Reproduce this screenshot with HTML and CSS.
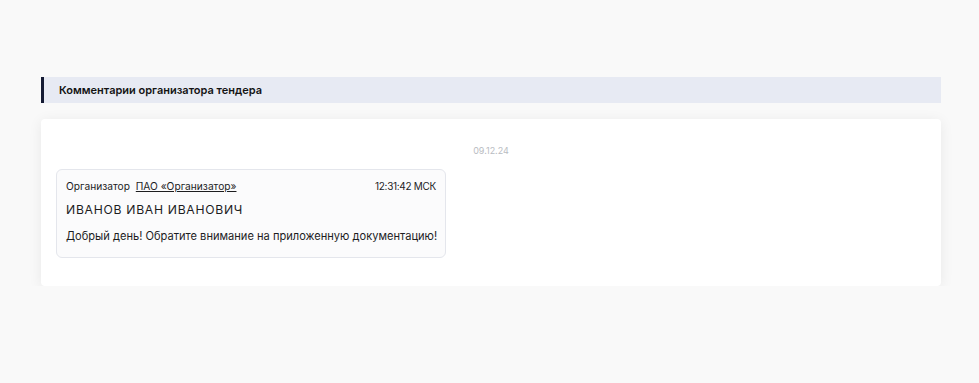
FILE: index.html
```html
<!DOCTYPE html>
<html lang="ru">
<head>
<meta charset="utf-8">
<link rel="stylesheet" href="styles.css">
</head>
<body>
<div class="page">
  <div class="section-title">Комментарии организатора тендера</div>
  <div class="card">
    <div class="date">09.12.24</div>
    <div class="message">
      <div class="meta">
        <div class="from">Организатор <a href="#" class="org">ПАО «Организатор»</a></div>
        <div class="time">12:31:42 МСК</div>
      </div>
      <div class="author">ИВАНОВ ИВАН ИВАНОВИЧ</div>
      <div class="text">Добрый день! Обратите внимание на приложенную документацию!</div>
    </div>
  </div>
</div>
</body>
</html>
```

FILE: styles.css
```css
html, body {
  margin: 0;
  padding: 0;
  background: #f9f9f9;
  font-family: "Inter", "Noto Sans", sans-serif;
  color: #1d1d1f;
}
.page {
  width: 900px;
  padding: 77px 0 0 41px;
}
.section-title {
  height: 26px;
  box-sizing: border-box;
  background: #e7eaf3;
  border-left: 3px solid #141a33;
  padding-left: 15px;
  font-size: 11px;
  font-weight: 600;
  line-height: 26px;
  color: #141414;
}
.card {
  margin-top: 16px;
  background: #fff;
  border-radius: 4px;
  box-shadow: 0 2px 14px rgba(0, 0, 0, 0.07);
  padding: 26px 15px 28px;
}
.date {
  text-align: center;
  font-size: 9px;
  color: #b9bcc2;
  line-height: 12px;
  margin-bottom: 12px;
}
.message {
  width: 390px;
  box-sizing: border-box;
  background: #fbfbfc;
  border: 1px solid #e4e6ec;
  border-radius: 6px;
  padding: 9px 9px 14px 9px;
  white-space: nowrap;
}
.meta {
  display: flex;
  justify-content: space-between;
  line-height: 14px;
  font-size: 10.2px;
}
.time {
  font-size: 10px;
  letter-spacing: -0.3px;
}
.org {
  color: #1d1d1f;
  text-decoration: underline;
  margin-left: 3px;
}
.author {
  margin-top: 10px;
  font-size: 12.2px;
  letter-spacing: 0.7px;
  line-height: 14px;
}
.text {
  margin-top: 12px;
  font-size: 11.1px;
  line-height: 14px;
}
```
